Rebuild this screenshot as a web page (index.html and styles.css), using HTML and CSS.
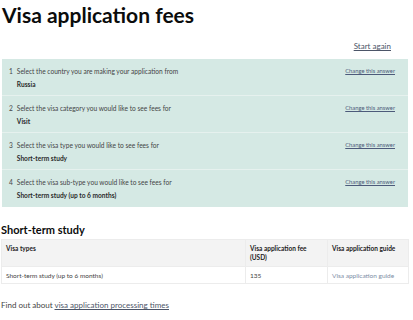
FILE: index.html
```html
<!DOCTYPE html>
<html>
<head>
<meta charset="utf-8">
<link rel="stylesheet" href="styles.css">
</head>
<body>
<h1 class="title">Visa application fees</h1>
<div class="restart"><a href="#">Start again</a></div>
<div class="answers">
  <div class="row">
    <div class="q"><span class="num">1</span><div><div class="qtext">Select the country you are making your application from</div><div class="ans">Russia</div></div></div>
    <a class="change" href="#">Change this answer</a>
  </div>
  <div class="row">
    <div class="q"><span class="num">2</span><div><div class="qtext">Select the visa category you would like to see fees for</div><div class="ans">Visit</div></div></div>
    <a class="change" href="#">Change this answer</a>
  </div>
  <div class="row">
    <div class="q"><span class="num">3</span><div><div class="qtext">Select the visa type you would like to see fees for</div><div class="ans">Short-term study</div></div></div>
    <a class="change" href="#">Change this answer</a>
  </div>
  <div class="row">
    <div class="q"><span class="num">4</span><div><div class="qtext">Select the visa sub-type you would like to see fees for</div><div class="ans">Short-term study (up to 6 months)</div></div></div>
    <a class="change" href="#">Change this answer</a>
  </div>
</div>
<h2 class="sub">Short-term study</h2>
<table class="fees">
  <thead>
    <tr><th class="c1">Visa types</th><th class="c2">Visa application fee (USD)</th><th class="c3">Visa application guide</th></tr>
  </thead>
  <tbody>
    <tr><td>Short-term study (up to 6 months)</td><td>135</td><td><a class="guide" href="#">Visa application guide</a></td></tr>
  </tbody>
</table>
<p class="find">Find out about <a href="#">visa application processing times</a></p>
</body>
</html>
```
FILE: styles.css
```css
html, body { margin: 0; padding: 0; background: #fff; }
body {
  font-family: "Lato", "Noto Sans", sans-serif;
  color: #2b2b2b;
  padding: 0 5px 0 2px;
  width: 406px;
}
.title {
  font-size: 21px;
  font-weight: 700;
  margin: 0;
  line-height: 30px;
  color: #0b0c0c;
}
.restart {
  display: flex;
  justify-content: flex-end;
  padding: 11px 17px 0 0;
  height: 29px;
  box-sizing: border-box;
}
.restart a {
  font-size: 8px;
  line-height: 10px;
  color: #4c5568;
  text-decoration: underline;
}
.answers {
  background: #d5e9e4;
}
.row {
  display: flex;
  justify-content: space-between;
  align-items: flex-start;
  height: 37px;
  box-sizing: border-box;
  padding: 7px 13px 0 7px;
  border-bottom: 1px solid #e6f1ee;
}
.row:last-child { border-bottom: none; }
.q { display: flex; gap: 4px; }
.num { font-size: 6.6px; line-height: 10px; color: #444; }
.qtext { font-size: 6.6px; line-height: 10px; color: #444; }
.ans { font-size: 6.6px; line-height: 10px; font-weight: 700; color: #2b2b2b; margin-top: 3px; }
.change { font-size: 5.8px; line-height: 10px; color: #4c5a7a; text-decoration: underline; }
.sub {
  font-size: 11px;
  font-weight: 700;
  margin: 14px 0 0 -1px;
  line-height: 18px;
  color: #0b0c0c;
}
.fees {
  border-collapse: collapse;
  width: 408px;
  margin-left: -1px;
  font-size: 6.5px;
  color: #444;
}
.fees th, .fees td {
  border: 1px solid #ececec;
  text-align: left;
  vertical-align: top;
  padding: 4px 4px;
  line-height: 9px;
}
.fees th { background: #f3f3f3; font-weight: 700; color: #222; height: 17px; }
.fees td { padding-top: 4px; padding-bottom: 3px; }
.c1 { width: 235px; }
.c2 { width: 73px; }
.guide { color: #7d8da5; text-decoration: none; }
.find {
  font-size: 8px;
  margin: 16px 0 0 -1px;
  color: #444;
}
.find a { color: #4c5568; text-decoration: underline; }
```
